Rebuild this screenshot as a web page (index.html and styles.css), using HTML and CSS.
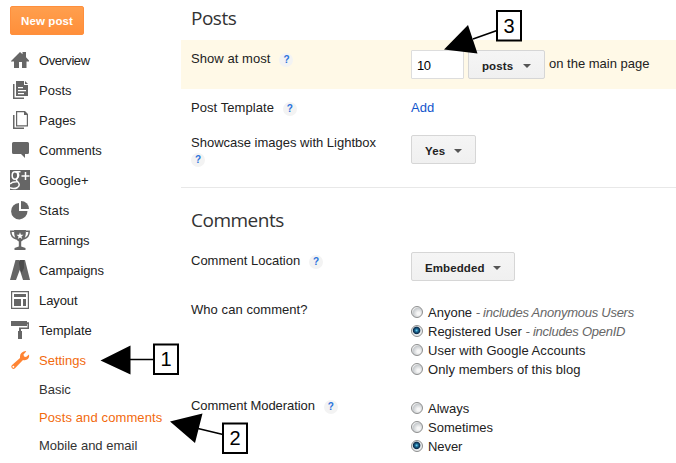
FILE: index.html
```html
<!DOCTYPE html>
<html lang="en">
<head>
<meta charset="utf-8">
<title>Settings</title>
<link rel="stylesheet" href="styles.css">
</head>
<body>
<div class="app">
  <aside class="sidebar">
    <button class="new-post">New post</button>
    <nav class="nav">
      <a class="item overview"><svg class="icon" viewBox="0 0 20 20"><path d="M1 11 10 2l2.500 2.200V2H16v5.300L19 10.500v1h-2.500V18H12v-6H9v6H4v-6.500H1z"/></svg><span>Overview</span></a>
      <a class="item"><svg class="icon" viewBox="0 0 20 20"><path d="M3 4h1.500v13.500H14V19H3z"/><path fill-rule="evenodd" d="M6 1h8v4h4v11H6zM8 7v1.200h5V7zm0 3v1.200h8V10zm0 3v1.200h6V13z"/><path d="M15 1l3 3h-3z"/></svg><span>Posts</span></a>
      <a class="item"><svg class="icon" viewBox="0 0 20 20"><path d="M3 5h1.500v12.500H14V19H3z"/><path fill-rule="evenodd" d="M6 1h9l3 3v12.500H6zM7.200 2.200v13.100h9.600V5H14V2.200z"/></svg><span>Pages</span></a>
      <a class="item"><svg class="icon" viewBox="0 0 20 20"><path d="M3.500 2h14Q19 2 19 3.500v9q0 1.500-1.500 1.500H15v4l-4-4H3.500Q2 14 2 12.500v-9Q2 2 3.500 2z"/></svg><span>Comments</span></a>
      <a class="item"><svg class="icon" viewBox="0 0 20 20"><path d="M0 0h20v20H0z"/><g class="cut"><ellipse cx="5" cy="5.500" rx="2.800" ry="3.700"/><path d="M5 1.700h5.500M7.800 2.500q2 3.500-.8 6-1.500 1.500.5 3 3.500 3.500 0 6-3.500 2-7.500.3M0 14q2-2.500 7-2.300M11.500 6h8M15.500 2v8"/></g></svg><span>Google+</span></a>
      <a class="item stats"><svg class="icon" viewBox="0 0 20 20"><path d="M9 3v8h8.500A8.200 8.200 0 1 1 9 3z"/><path d="M11 1a8 8 0 0 1 8 8h-8z"/></svg><span>Stats</span></a>
      <a class="item earnings"><svg class="icon" viewBox="0 0 20 20"><path fill-rule="evenodd" d="M4 0h12l-.3 4.500Q15 9.500 11.200 11.500v5L15.500 18v2h-11v-2l4.300-1.500v-5Q5 9.500 4.300 4.500zM10 2.300 9.100 4.800H6.500l2.100 1.600-.8 2.500L10 7.400l2.200 1.500-.8-2.500 2.100-1.600h-2.600z"/><path class="line" d="M4 1.200H.8Q.8 7.500 6.500 9M16 1.200h3.200Q19.200 7.500 13.500 9"/></svg><span>Earnings</span></a>
      <a class="item campaigns"><svg class="icon" viewBox="0 0 20 20"><path d="M5.500 0H9l3 4-6 16H0zM12 0h3l5 20h-7L9.500 9z"/><path class="dark" d="M9.500 0H14v8l-2.500 5-1.500-4L9 3z"/></svg><span>Campaigns</span></a>
      <a class="item layout"><svg class="icon" viewBox="0 0 20 20"><path fill-rule="evenodd" d="M1 1h18v18H1zm1.200 1.200v15.600h15.600V2.200z"/><path d="M4 4h12v3H4zM4 9h7v7H4zM13 9h3v7h-3z"/></svg><span>Layout</span></a>
      <a class="item"><svg class="icon" viewBox="0 0 20 20"><path d="M1 1h16v1.200h2V9h-8v2h1v8H8v-8h1V7.500h8.500V4H17v2H1z"/></svg><span>Template</span></a>
      <a class="item active"><svg class="icon" viewBox="0 0 20 20"><path fill-rule="evenodd" d="M10 6.500Q10 2 15.500 1l.7.500L13.500 4.500l.5 2 2 .5L19 4.500q.8 4-2.500 5.300-1.500.7-3.500.2l-8 8.300Q3.500 19.500 2 18.200q-1.500-1.500-.2-3L10 8zM3.300 15.800a.9.900 0 1 0 .1 0z"/></svg><span>Settings</span></a>
    </nav>
    <nav class="subnav">
      <a>Basic</a>
      <a class="active">Posts and comments</a>
      <a>Mobile and email</a>
    </nav>
  </aside>

  <main class="main">
    <section class="group posts">
      <h2>Posts</h2>
      <div class="row highlight">
        <div class="label"><span class="loose">Show at most</span><i class="help">?</i></div>
        <div class="control inline"><input class="count" type="text" value="10"><button class="select wide">posts</button><span class="suffix">on the main page</span></div>
      </div>
      <div class="row short">
        <div class="label"><span class="loose">Post Template</span><i class="help">?</i></div>
        <div class="control link"><a>Add</a></div>
      </div>
      <div class="row tall">
        <div class="label"><span>Showcase images with Lightbox</span><br><i class="help first">?</i></div>
        <div class="control"><button class="select yes">Yes</button></div>
      </div>
    </section>
    <section class="group">
      <h2 class="second">Comments</h2>
      <div class="row">
        <div class="label"><span>Comment Location</span><i class="help">?</i></div>
        <div class="control"><button class="select embedded">Embedded</button></div>
      </div>
      <div class="row options">
        <div class="label"><span class="loose">Who can comment?</span></div>
        <div class="control radios">
          <label><i class="radio"></i><span>Anyone <em>- includes Anonymous Users</em></span></label>
          <label><i class="radio on"></i><span>Registered User <em>- includes OpenID</em></span></label>
          <label><i class="radio"></i><span class="loose">User with Google Accounts</span></label>
          <label><i class="radio"></i><span class="loose">Only members of this blog</span></label>
        </div>
      </div>
      <div class="row">
        <div class="label"><span class="tight">Comment Moderation</span><i class="help">?</i></div>
        <div class="control radios">
          <label><i class="radio"></i><span>Always</span></label>
          <label><i class="radio"></i><span>Sometimes</span></label>
          <label><i class="radio on"></i><span class="tight">Never</span></label>
        </div>
      </div>
    </section>
  </main>

  <svg class="callouts" viewBox="0 0 676 463">
    <path d="M100.500 360.500 130.500 345.500v29zM170 421.500l32.500-8L195 443zM444 49.500 468 25l9.500 28.500z"/>
    <path class="stem" d="M130 359.500h24M198 428.500l25 6M473 39l24-8.500"/>
    <g class="box"><rect x="154" y="344.500" width="24" height="29.500"/><rect x="223" y="423.500" width="24" height="29.500"/><rect x="497" y="11" width="24" height="29.500"/></g>
    <g class="digit"><text x="166" y="366">1</text><text x="235" y="445">2</text><text x="509" y="32.500">3</text></g>
  </svg>
</div>
</body>
</html>
```
FILE: styles.css
```css
* { box-sizing: border-box; }
body { margin: 0; background: #fff; color: #222; font: 13px "Liberation Sans", Arial, sans-serif; }
.app { position: relative; display: flex; width: 676px; height: 463px; overflow: hidden; }
.sidebar { flex: none; width: 181px; padding: 6px 0 0 10px; }
.new-post { display: block; width: 74px; height: 29px; margin-bottom: 10px; padding: 0; border: 1px solid #ff8f3c; border-radius: 2px; background: linear-gradient(#ff9f4e, #ff8f3a); color: #fff; font: bold 11.5px "Liberation Sans", Arial, sans-serif; letter-spacing: .1px; }
.nav .item { display: flex; align-items: center; gap: 9px; height: 30px; white-space: nowrap; }
.nav .overview { letter-spacing: -.45px; }
.nav .earnings, .nav .campaigns, .nav .layout { letter-spacing: -.1px; }
.nav .stats { letter-spacing: .15px; }
.icon { flex: none; width: 20px; height: 20px; fill: #666; }
.icon .cut { fill: none; stroke: #fff; stroke-width: 1.500; }
.icon .line { fill: none; stroke: #666; stroke-width: 1.500; }
.icon .dark { fill: #4a4a4a; }
.item.active, .subnav .active { color: #f26a0e; }
.item.active .icon { fill: #ff8433; }
.subnav { display: flex; flex-direction: column; padding-left: 29px; color: #333; white-space: nowrap; }
.subnav a { height: 28px; line-height: 29px; }
.subnav .active { letter-spacing: .11px; }

.main { flex: 1; min-width: 0; }
.group.posts { border-bottom: 1px solid #e8e8e8; height: 188px; }
h2 { height: 40px; margin: 0; padding-left: 10px; color: #333; font: 19px/37px "Open Sans", sans-serif; letter-spacing: -.5px; }
h2.second { height: 54px; line-height: 65px; }
.row { display: flex; height: 49px; }
.row.highlight { background: #fff9e7; }
.row.short { height: 37px; }
.row.tall { height: 61px; }
.row.options { height: 96px; }
.label { flex: none; width: 230px; padding: 10px 0 0 10px; line-height: 17px; white-space: nowrap; }
.row.tall .label { padding-top: 9px; line-height: 16px; }
.loose { letter-spacing: .06px; }
.tight { letter-spacing: -.06px; }
.help { display: inline-block; width: 14px; height: 14px; margin-left: 9px; border-radius: 50%; background: #f3f3f3; color: #2a72dc; font: bold 10px/14px "Liberation Sans", Arial, sans-serif; text-align: center; }
.help.first { margin-left: 0; }
.control { padding-top: 10px; white-space: nowrap; }
.row.tall .control { padding-top: 9px; }
.control.inline { display: flex; }
.control.link { line-height: 17px; color: #15c; }
.count { width: 53px; height: 29px; margin-right: 4px; padding: 1px 5px 0; border: 1px solid #ddd; border-radius: 1px; background: #fff; color: #000; font: 13px "Liberation Sans", Arial, sans-serif; letter-spacing: -.4px; }
.suffix { margin-left: 4px; line-height: 27px; }
.select { display: flex; align-items: center; height: 29px; padding: 3px 13px 0; border: 1px solid #d6d6d6; border-radius: 2px; background: linear-gradient(#f5f5f5, #f0f0f0); color: #222; font: bold 11.5px "Liberation Sans", Arial, sans-serif; letter-spacing: .1px; }
.select::after { content: ""; margin-left: auto; border: 4px solid transparent; border-top-color: #555; border-bottom: 0; }
.select.wide { width: 77px; }
.select.yes { width: 65px; }
.select.embedded { width: 104px; }
.control.radios { padding-top: 11px; }
.radios label { display: flex; height: 19px; line-height: 21px; }
.radio { width: 12px; height: 12px; margin: 4px 5px 0 0; border: 1px solid #8e8f8f; border-radius: 50%; background: radial-gradient(circle at 65% 65%, #f6f6f6 15%, #c6cacd 60%, #f4f4f4 72%); }
.radio.on { background: radial-gradient(circle at 46% 44%, #6fd3f5 0, #1b6a94 20%, #0b2b4a 42%, #e4e8ea 54%, #eee 80%); }
em { color: #666; letter-spacing: -.26px; }

.callouts { position: absolute; left: 0; top: 0; width: 676px; height: 463px; pointer-events: none; }
.stem { fill: none; stroke: #000; stroke-width: 1.700; }
.box { fill: #fff; stroke: #000; stroke-width: 2; }
.digit { font: 20px "Liberation Sans", Arial, sans-serif; text-anchor: middle; }
```
